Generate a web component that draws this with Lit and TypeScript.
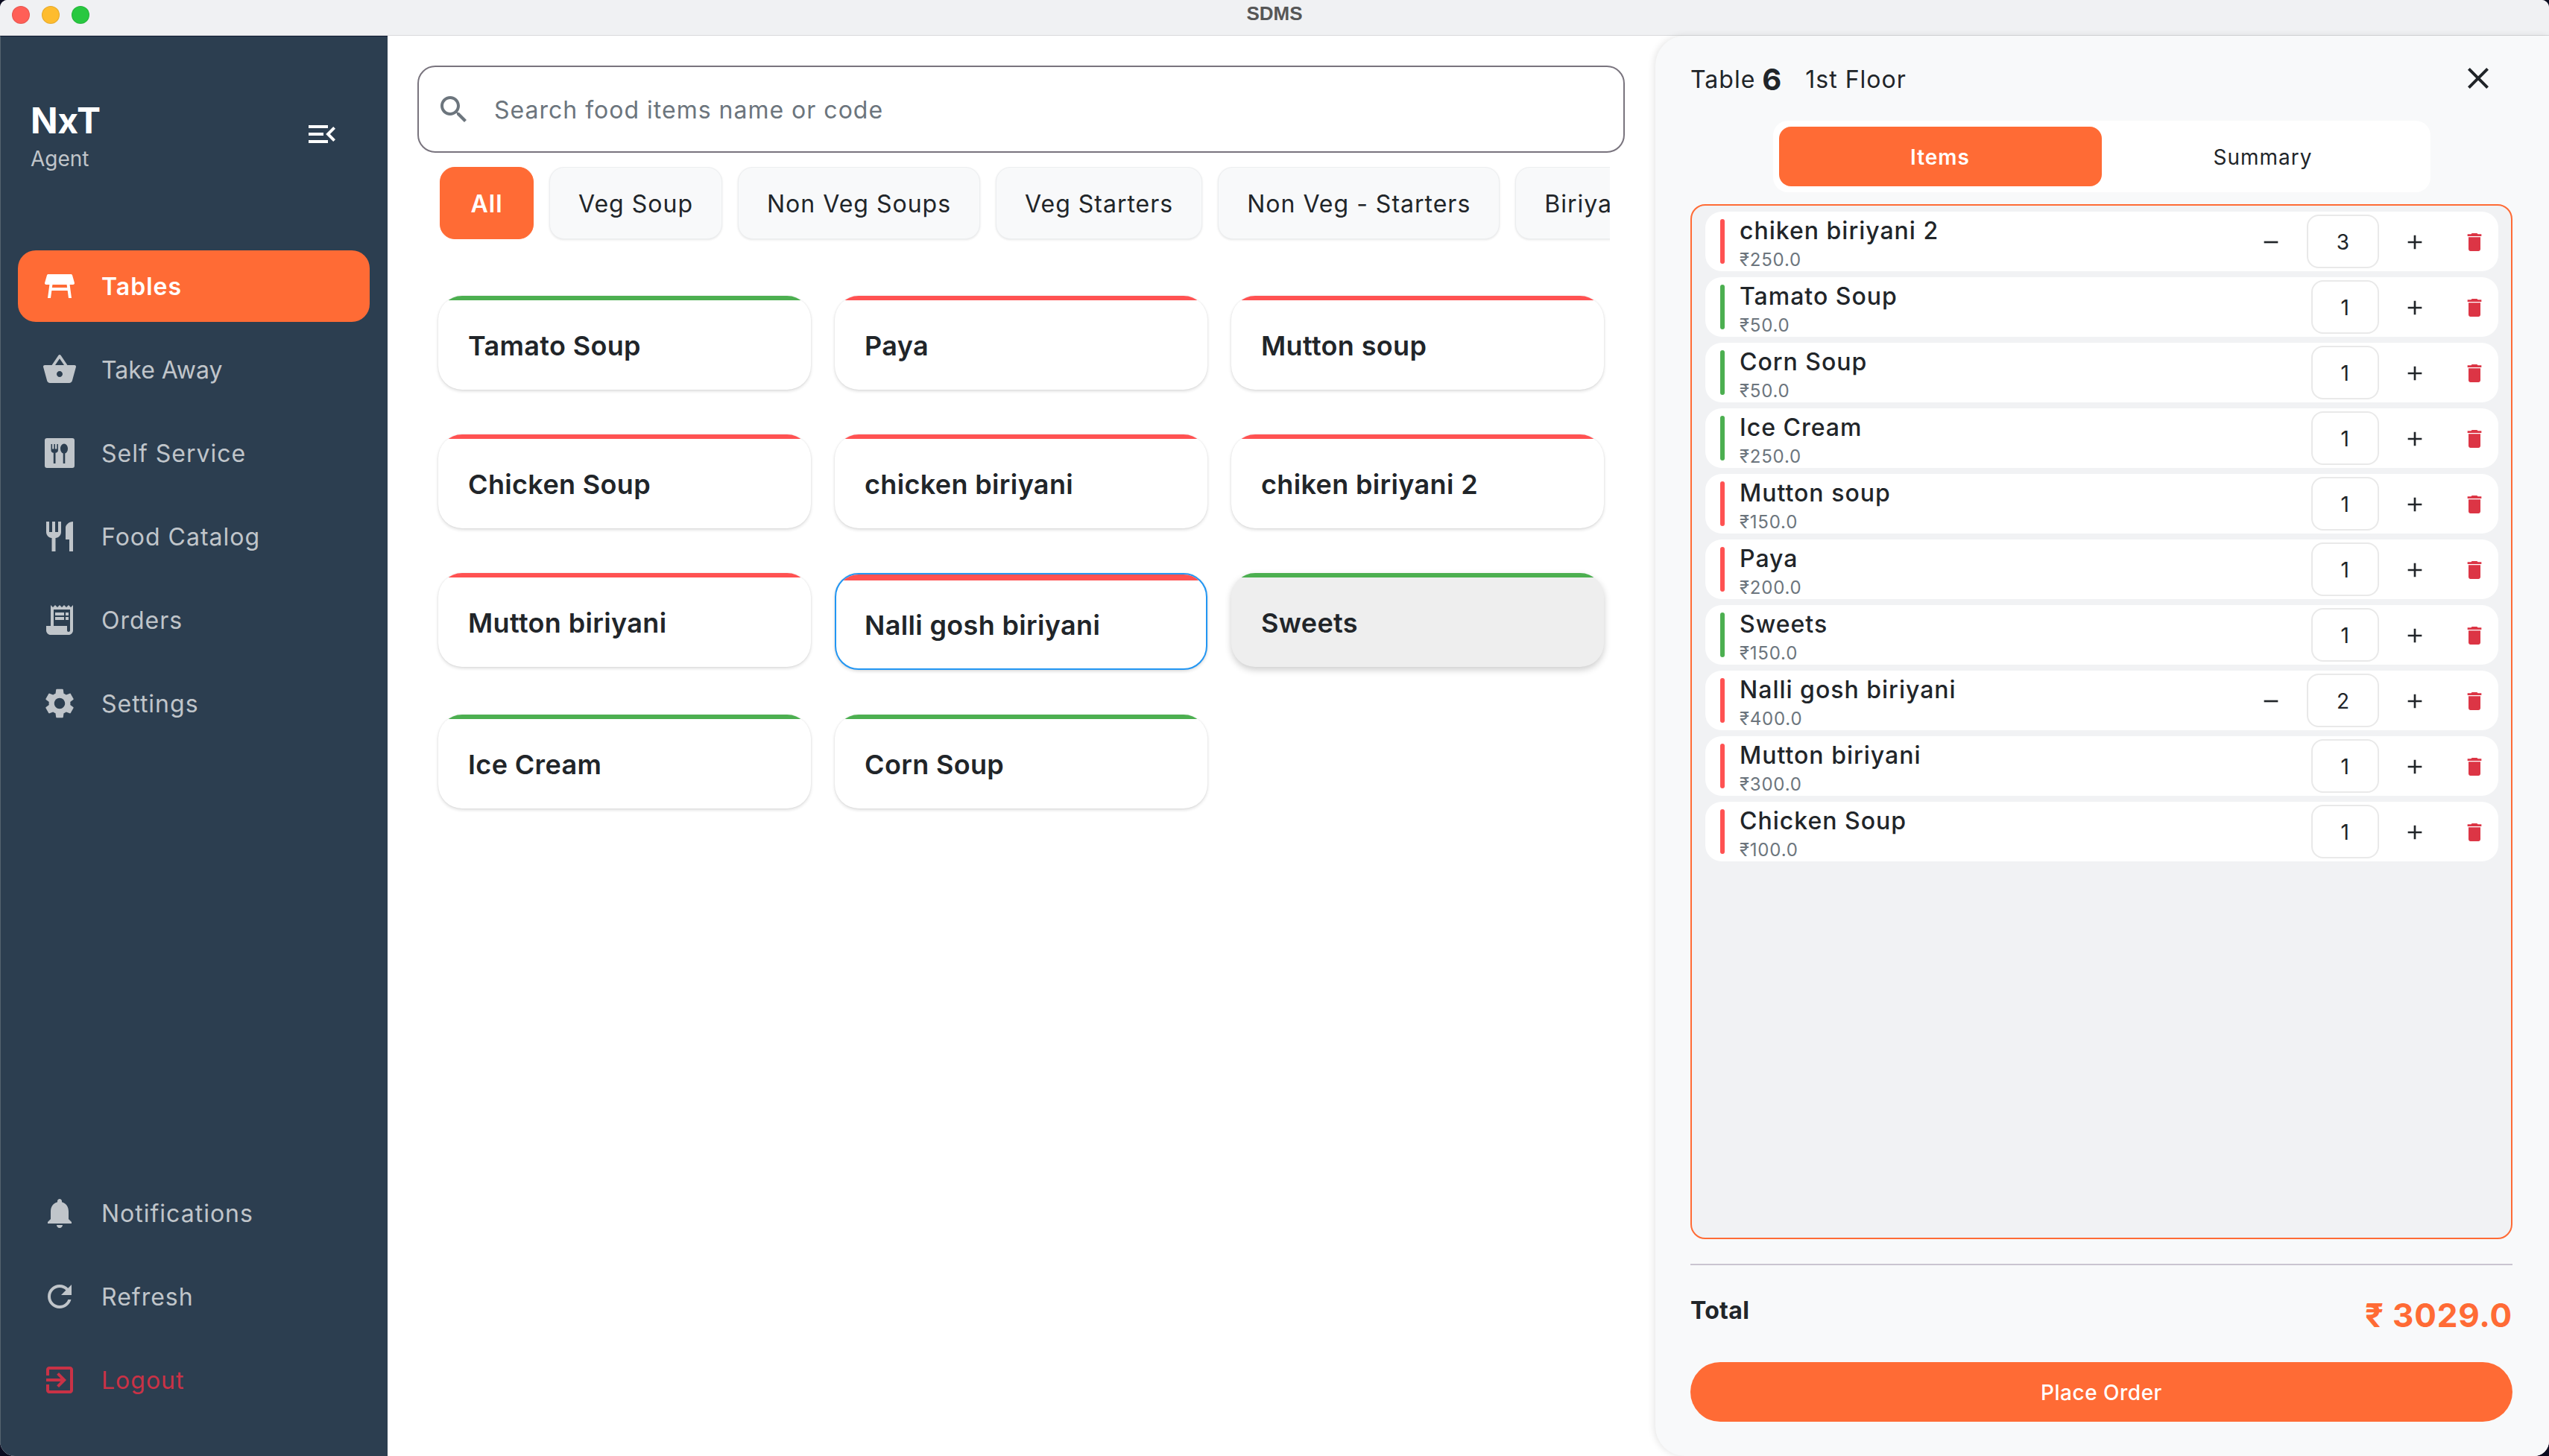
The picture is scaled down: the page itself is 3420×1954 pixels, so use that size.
import { LitElement, html, css, svg } from "lit";
import { customElement } from "lit/decorators.js";

const icons: Record<string, unknown> = {
  tables: svg`<path d="M21.96 9.73l-1.43-5C20.41 4.3 20.02 4 19.57 4H4.43C3.98 4 3.59 4.3 3.47 4.73l-1.43 5C1.86 10.36 2.34 11 3 11h2.2L4 20h2l.67-5h10.67l.66 5h2l-1.2-9H21c.66 0 1.14-.64.96-1.27zM6.93 13l.27-2h9.6l.27 2H6.93z"/>`,
  basket: svg`<path d="M17.21 9l-4.38-6.56c-.19-.28-.51-.42-.83-.42-.32 0-.64.14-.83.43L6.79 9H2c-.55 0-1 .45-1 1 0 .09.01.18.04.27l2.54 9.27c.23.84 1 1.46 1.92 1.46h13c.92 0 1.69-.62 1.93-1.46l2.54-9.27L23 10c0-.55-.45-1-1-1h-4.79zM9 9l3-4.4L15 9H9zm3 8c-1.1 0-2-.9-2-2s.9-2 2-2 2 .9 2 2-.9 2-2 2z"/>`,
  dining: svg`<path fill-rule="evenodd" d="M3.5 2h17A1.5 1.5 0 0 1 22 3.5v17a1.5 1.5 0 0 1-1.5 1.5h-17A1.5 1.5 0 0 1 2 20.5v-17A1.5 1.5 0 0 1 3.5 2zM6.25 6h.8v3.2h1.15V6h.8v3.2h1.15V6h.8v4.2c0 .9-.8 1.6-1.7 1.7V19H7.9v-7.1c-.9-.1-1.65-.8-1.65-1.7zM15 5.8c1.4 0 2.5 1.5 2.5 3.3 0 1.5-.8 2.8-1.85 3.1V19h-1.3v-6.8c-1.05-.3-1.85-1.6-1.85-3.1 0-1.8 1.1-3.3 2.5-3.3z"/>`,
  restaurant: svg`<path d="M11 9H9V2H7v7H5V2H3v7c0 2.12 1.66 3.84 3.75 3.97V22h2.5v-9.03C11.34 12.84 13 11.12 13 9V2h-2v7zm5-3v8h2.5v8H21V2c-2.76 0-5 2.24-5 4z"/>`,
  receipt: svg`<path d="M19.5 3.5L18 2l-1.5 1.5L15 2l-1.5 1.5L12 2l-1.5 1.5L9 2 7.5 3.5 6 2v14H3v3c0 1.66 1.34 3 3 3h12c1.66 0 3-1.34 3-3V2l-1.5 1.5zM19 19c0 .55-.45 1-1 1s-1-.45-1-1v-3H8V5h11v14z"/><path d="M9 7h6v2H9zM16 7h2v2h-2zM9 10h6v2H9zM16 10h2v2h-2z"/>`,
  settings: svg`<path d="M19.14 12.94c.04-.3.06-.61.06-.94 0-.32-.02-.64-.07-.94l2.03-1.58c.18-.14.23-.41.12-.61l-1.92-3.32c-.12-.22-.37-.29-.59-.22l-2.39.96c-.5-.38-1.03-.7-1.62-.94l-.36-2.54c-.04-.24-.24-.41-.48-.41h-3.84c-.24 0-.43.17-.47.41l-.36 2.54c-.59.24-1.13.57-1.62.94l-2.39-.96c-.22-.08-.47 0-.59.22L2.74 8.87c-.12.21-.08.47.12.61l2.03 1.58c-.05.3-.09.63-.09.94s.02.64.07.94l-2.03 1.58c-.18.14-.23.41-.12.61l1.92 3.32c.12.22.37.29.59.22l2.39-.96c.5.38 1.03.7 1.62.94l.36 2.54c.05.24.24.41.48.41h3.84c.24 0 .44-.17.47-.41l.36-2.54c.59-.24 1.13-.56 1.62-.94l2.39.96c.22.08.47 0 .59-.22l1.92-3.32c.12-.22.07-.47-.12-.61l-2.01-1.58zM12 15.6c-1.98 0-3.6-1.62-3.6-3.6s1.62-3.6 3.6-3.6 3.6 1.62 3.6 3.6-1.62 3.6-3.6 3.6z"/>`,
  bell: svg`<path d="M12 22c1.1 0 2-.9 2-2h-4c0 1.1.89 2 2 2zm6-6v-5c0-3.07-1.64-5.64-4.5-6.32V4c0-.83-.67-1.5-1.5-1.5s-1.5.67-1.5 1.5v.68C7.63 5.36 6 7.92 6 11v5l-2 2v1h16v-1l-2-2z"/>`,
  refresh: svg`<path d="M17.65 6.35C16.2 4.9 14.21 4 12 4c-4.42 0-7.99 3.58-7.99 8s3.57 8 7.99 8c3.73 0 6.84-2.55 7.73-6h-2.08c-.82 2.33-3.04 4-5.65 4-3.31 0-6-2.69-6-6s2.69-6 6-6c1.66 0 3.14.69 4.22 1.78L13 11h7V4l-2.35 2.35z"/>`,
  logout: svg`<path d="M10.09 15.59L11.5 17l5-5-5-5-1.41 1.41L12.67 11H3v2h9.67l-2.58 2.59zM19 3H5c-1.11 0-2 .9-2 2v4h2V5h14v14H5v-4H3v4c0 1.1.89 2 2 2h14c1.1 0 2-.9 2-2V5c0-1.1-.9-2-2-2z"/>`,
  menuOpen: svg`<path d="M3 18h13v-2H3v2zm0-5h10v-2H3v2zm0-7v2h13V6H3zm18 9.59L17.42 12 21 8.41 19.59 7l-5 5 5 5L21 15.59z"/>`,
  search: svg`<path d="M15.5 14h-.79l-.28-.27C15.41 12.59 16 11.11 16 9.5 16 5.91 13.09 3 9.5 3S3 5.91 3 9.5 5.91 16 9.5 16c1.61 0 3.09-.59 4.23-1.57l.27.28v.79l5 4.99L20.49 19l-4.99-5zm-6 0C7.01 14 5 11.99 5 9.5S7.01 5 9.5 5 14 7.01 14 9.5 11.99 14 9.5 14z"/>`,
  close: svg`<path d="M19 6.41L17.59 5 12 10.59 6.41 5 5 6.41 10.59 12 5 17.59 6.41 19 12 13.41 17.59 19 19 17.59 13.41 12z"/>`,
  minus: svg`<path d="M19 13H5v-2h14v2z"/>`,
  plus: svg`<path d="M19 13h-6v6h-2v-6H5v-2h6V5h2v6h6v2z"/>`,
  trash: svg`<path d="M6 19c0 1.1.9 2 2 2h8c1.1 0 2-.9 2-2V7H6v12zM19 4h-3.5l-1-1h-5l-1 1H5v2h14V4z"/>`,
};

const icon = (name: string, cls = "") =>
  html`<svg class="icon ${cls}" viewBox="0 0 24 24" fill="currentColor">${icons[name]}</svg>`;

const topNav = [
  { label: "Tables", icon: "tables", active: true },
  { label: "Take Away", icon: "basket", tight: true },
  { label: "Self Service", icon: "dining" },
  { label: "Food Catalog", icon: "restaurant" },
  { label: "Orders", icon: "receipt" },
  { label: "Settings", icon: "settings" },
];

const bottomNav = [
  { label: "Notifications", icon: "bell" },
  { label: "Refresh", icon: "refresh" },
  { label: "Logout", icon: "logout", danger: true },
];

const chips = ["All", "Veg Soup", "Non Veg Soups", "Veg Starters", "Non Veg - Starters", "Biriyani"];

const foods = [
  { name: "Tamato Soup", veg: true },
  { name: "Paya" },
  { name: "Mutton soup" },
  { name: "Chicken Soup" },
  { name: "chicken biriyani" },
  { name: "chiken biriyani 2" },
  { name: "Mutton biriyani" },
  { name: "Nalli gosh biriyani", selected: true },
  { name: "Sweets", veg: true, hover: true },
  { name: "Ice Cream", veg: true },
  { name: "Corn Soup", veg: true },
];

const orderItems = [
  { name: "chiken biriyani 2", price: "250.0", qty: 3 },
  { name: "Tamato Soup", price: "50.0", qty: 1, veg: true },
  { name: "Corn Soup", price: "50.0", qty: 1, veg: true },
  { name: "Ice Cream", price: "250.0", qty: 1, veg: true },
  { name: "Mutton soup", price: "150.0", qty: 1 },
  { name: "Paya", price: "200.0", qty: 1 },
  { name: "Sweets", price: "150.0", qty: 1, veg: true },
  { name: "Nalli gosh biriyani", price: "400.0", qty: 2 },
  { name: "Mutton biriyani", price: "300.0", qty: 1 },
  { name: "Chicken Soup", price: "100.0", qty: 1 },
];

@customElement("app-root")
export class AppRoot extends LitElement {
  static styles = css`
    :host {
      display: block;
      height: 100vh;
      background: #0b0c20;
      font-family: Inter, "Noto Sans", sans-serif;
      font-kerning: normal;
      color: #212529;
    }
    * {
      box-sizing: border-box;
    }
    .icon {
      display: block;
      flex: none;
      width: 48px;
      height: 48px;
    }
    .window {
      height: 100%;
      display: flex;
      flex-direction: column;
      overflow: hidden;
      border-radius: 10px 10px 20px 20px;
      background: #fff;
    }
    .titlebar {
      flex: none;
      height: 48px;
      display: grid;
      grid-template-columns: 1fr auto 1fr;
      background: #f0f1f3;
      border-bottom: 1px solid #d9dadc;
    }
    .lights {
      display: flex;
      gap: 16px;
      padding: 8px 0 0 16px;
    }
    .light {
      width: 24px;
      height: 24px;
      border-radius: 50%;
      border: 1px solid rgba(0, 0, 0, 0.1);
    }
    .title {
      font-family: "Liberation Sans", Arial, sans-serif;
      font-size: 26px;
      font-weight: 700;
      line-height: 37px;
      color: #565656;
    }
    .body {
      flex: 1;
      min-height: 0;
      display: flex;
    }
    .sidebar {
      flex: none;
      width: 520px;
      display: flex;
      flex-direction: column;
      padding-bottom: 54px;
      background: #2c3e50;
      border-top: 1px solid #101c33;
      border-left: 1px solid #56636f;
      color: #c0c5ca;
    }
    .brand {
      flex: none;
      height: 287px;
      display: flex;
      justify-content: space-between;
      padding: 84px 64px 0 40px;
    }
    .brand-name {
      font-size: 48px;
      font-weight: 700;
      line-height: 58px;
      letter-spacing: -0.4px;
      color: #fff;
    }
    .brand-role {
      margin-top: 5px;
      font-size: 28px;
      line-height: 34px;
    }
    .collapse {
      margin-top: 23px;
      color: #fff;
    }
    .nav {
      display: flex;
      flex-direction: column;
      gap: 16px;
    }
    .nav-bottom {
      margin-top: auto;
    }
    .nav-item {
      height: 96px;
      margin: 0 24px 0 23px;
      padding-left: 32px;
      display: flex;
      align-items: center;
      gap: 32px;
      border-radius: 24px;
      font-size: 32px;
      letter-spacing: 1px;
    }
    .nav-item.tight {
      letter-spacing: 0;
    }
    .nav-item.active {
      background: #ff6b35;
      color: #fff;
      font-weight: 600;
    }
    .nav-item.danger {
      color: #c93246;
    }
    .main {
      flex: none;
      width: 1701px;
      padding: 40px 0 0 40px;
    }
    .search {
      width: 1620px;
      height: 117px;
      display: flex;
      align-items: center;
      gap: 30px;
      padding-left: 23px;
      border: 2px solid #79747e;
      border-radius: 24px;
      font-size: 32px;
      letter-spacing: 1px;
      color: #6c757d;
    }
    .search span {
      padding-top: 2px;
    }
    .chips {
      width: 1600px;
      margin-top: 19px;
      padding: 0 0 6px 30px;
      display: flex;
      gap: 21px;
      overflow: hidden;
    }
    .chip {
      flex: none;
      height: 97px;
      padding: 2px 38px 0;
      display: flex;
      align-items: center;
      justify-content: center;
      border: 1px solid #eceef0;
      border-radius: 20px;
      background: #f8f9fa;
      box-shadow: 0 1px 3px rgba(0, 0, 0, 0.1);
      font-size: 32px;
      letter-spacing: 1px;
    }
    .chip.active {
      min-width: 126px;
      border-color: #ff6b35;
      background: #ff6b35;
      color: #fff;
      font-weight: 600;
      box-shadow: none;
    }
    .foods {
      margin: 70px 0 0 28px;
      display: grid;
      grid-template-columns: repeat(3, 500px);
      gap: 60px 32px;
      align-items: start;
    }
    .food {
      height: 126px;
      display: flex;
      flex-direction: column;
      overflow: hidden;
      border-radius: 32px;
      background: #fff;
      box-shadow: 0 2px 4px rgba(0, 0, 0, 0.14), 0 0 2px rgba(0, 0, 0, 0.08);
    }
    .food-bar {
      flex: none;
      height: 6px;
    }
    .food-name {
      flex: 1;
      display: flex;
      align-items: center;
      padding: 2px 0 0 40px;
      font-size: 36px;
      font-weight: 600;
      letter-spacing: 0.35px;
    }
    .food.selected {
      height: 130px;
      border: 2px solid #2196f3;
    }
    .food.selected .food-bar {
      height: 8px;
    }
    .food.selected .food-name {
      padding-left: 38px;
    }
    .food.hover {
      background: #eeeeee;
      box-shadow: 0 4px 10px rgba(0, 0, 0, 0.2);
    }
    .veg {
      background: #4caf50;
    }
    .nonveg {
      background: #ff5252;
    }
    .panel {
      flex: 1;
      min-width: 0;
      display: flex;
      flex-direction: column;
      padding: 0 49px 46px 47px;
      background: #f8f9fa;
      border-radius: 40px 0 0 40px;
      box-shadow: -2px 0 10px rgba(0, 0, 0, 0.1);
    }
    .panel-head {
      flex: none;
      height: 114px;
      display: flex;
      align-items: center;
      font-size: 32px;
      letter-spacing: 1px;
    }
    .panel-head span {
      padding-top: 3px;
    }
    .panel-head .table-no {
      margin: 0 31px 0 9px;
      padding-top: 2px;
      font-size: 40px;
      font-weight: 700;
    }
    .close {
      margin-left: auto;
      margin-right: 22px;
    }
    .tabs {
      flex: none;
      align-self: center;
      width: 882px;
      height: 96px;
      padding: 8px;
      display: grid;
      grid-template-columns: 1fr 1fr;
      border-radius: 20px;
      background: #fff;
    }
    .tab {
      display: flex;
      align-items: center;
      justify-content: center;
      padding-top: 2px;
      border-radius: 16px;
      font-size: 28px;
      font-weight: 400;
      letter-spacing: 1px;
    }
    .tab.active {
      background: #ff6b35;
      color: #fff;
      font-weight: 600;
    }
    .items {
      flex: 1;
      min-height: 0;
      margin-top: 16px;
      padding: 8px 17px 8px 18px;
      display: flex;
      flex-direction: column;
      gap: 8px;
      border: 2px solid #ff6b35;
      border-radius: 20px;
      background: #f1f2f4;
    }
    .item {
      flex: none;
      height: 80px;
      padding: 2px 16px 0 20px;
      display: flex;
      align-items: center;
      border-radius: 22px;
      background: #fff;
    }
    .item-bar {
      flex: none;
      width: 6px;
      height: 60px;
      margin-top: -2px;
      border-radius: 3px;
    }
    .item-info {
      flex: 1;
      min-width: 0;
      padding: 2px 0 0 20px;
    }
    .item-name {
      font-size: 32px;
      font-weight: 500;
      line-height: 40px;
      letter-spacing: 1px;
    }
    .item-price {
      margin-top: 5px;
      font-size: 24px;
      line-height: 28px;
      letter-spacing: 0.8px;
      color: #6c757d;
    }
    .qty-btn {
      width: 32px;
      height: 32px;
    }
    .qty {
      height: 72px;
      margin: -2px 32px 0;
      padding: 2px 38px 0;
      display: flex;
      align-items: center;
      border: 2px solid #e9e9e9;
      border-radius: 16px;
      font-size: 28px;
    }
    .trash {
      width: 32px;
      height: 32px;
      margin-left: 48px;
      color: #dc3545;
    }
    .divider {
      flex: none;
      height: 2px;
      margin-top: 33px;
      background: #cac4d0;
    }
    .total {
      flex: none;
      height: 130px;
      display: flex;
      justify-content: space-between;
      padding-top: 40px;
    }
    .total-label {
      margin-top: 1px;
      font-size: 32px;
      line-height: 40px;
      font-weight: 700;
      letter-spacing: 0.3px;
    }
    .total-value {
      font-size: 44px;
      line-height: 54px;
      font-weight: 700;
      letter-spacing: 0.8px;
      color: #ff6b35;
    }
    .place {
      flex: none;
      height: 80px;
      display: flex;
      align-items: center;
      justify-content: center;
      padding-top: 2px;
      border-radius: 40px;
      background: #ff6b35;
      color: #fff;
      font-size: 28px;
      font-weight: 500;
      letter-spacing: 0.5px;
    }
  `;

  navItem(n: { label: string; icon: string; active?: boolean; danger?: boolean; tight?: boolean }) {
    return html`<div class="nav-item ${n.active ? "active" : ""} ${n.danger ? "danger" : ""} ${n.tight ? "tight" : ""}">
      ${icon(n.icon)}<span>${n.label}</span>
    </div>`;
  }

  render() {
    return html`
      <div class="window">
        <div class="titlebar">
          <div class="lights">
            <div class="light" style="background:#ff5f57"></div>
            <div class="light" style="background:#febc2e"></div>
            <div class="light" style="background:#28c840"></div>
          </div>
          <div class="title">SDMS</div>
        </div>
        <div class="body">
          <aside class="sidebar">
            <div class="brand">
              <div>
                <div class="brand-name">NxT</div>
                <div class="brand-role">Agent</div>
              </div>
              ${icon("menuOpen", "collapse")}
            </div>
            <div class="nav">${topNav.map((n) => this.navItem(n))}</div>
            <div class="nav nav-bottom">${bottomNav.map((n) => this.navItem(n))}</div>
          </aside>
          <main class="main">
            <div class="search">${icon("search")}<span>Search food items name or code</span></div>
            <div class="chips">
              ${chips.map((c, i) => html`<div class="chip ${i === 0 ? "active" : ""}">${c}</div>`)}
            </div>
            <div class="foods">
              ${foods.map(
                (f) => html`<div class="food ${f.selected ? "selected" : ""} ${f.hover ? "hover" : ""}">
                  <div class="food-bar ${f.veg ? "veg" : "nonveg"}"></div>
                  <div class="food-name">${f.name}</div>
                </div>`
              )}
            </div>
          </main>
          <section class="panel">
            <div class="panel-head">
              <span>Table</span><span class="table-no">6</span><span>1st Floor</span>
              ${icon("close", "close")}
            </div>
            <div class="tabs">
              <div class="tab active">Items</div>
              <div class="tab">Summary</div>
            </div>
            <div class="items">
              ${orderItems.map(
                (it) => html`<div class="item">
                  <div class="item-bar ${it.veg ? "veg" : "nonveg"}"></div>
                  <div class="item-info">
                    <div class="item-name">${it.name}</div>
                    <div class="item-price">₹${it.price}</div>
                  </div>
                  ${it.qty > 1 ? icon("minus", "qty-btn") : ""}
                  <div class="qty">${it.qty}</div>
                  ${icon("plus", "qty-btn")} ${icon("trash", "trash")}
                </div>`
              )}
            </div>
            <div class="divider"></div>
            <div class="total">
              <div class="total-label">Total</div>
              <div class="total-value">₹ 3029.0</div>
            </div>
            <div class="place">Place Order</div>
          </section>
        </div>
      </div>
    `;
  }
}
